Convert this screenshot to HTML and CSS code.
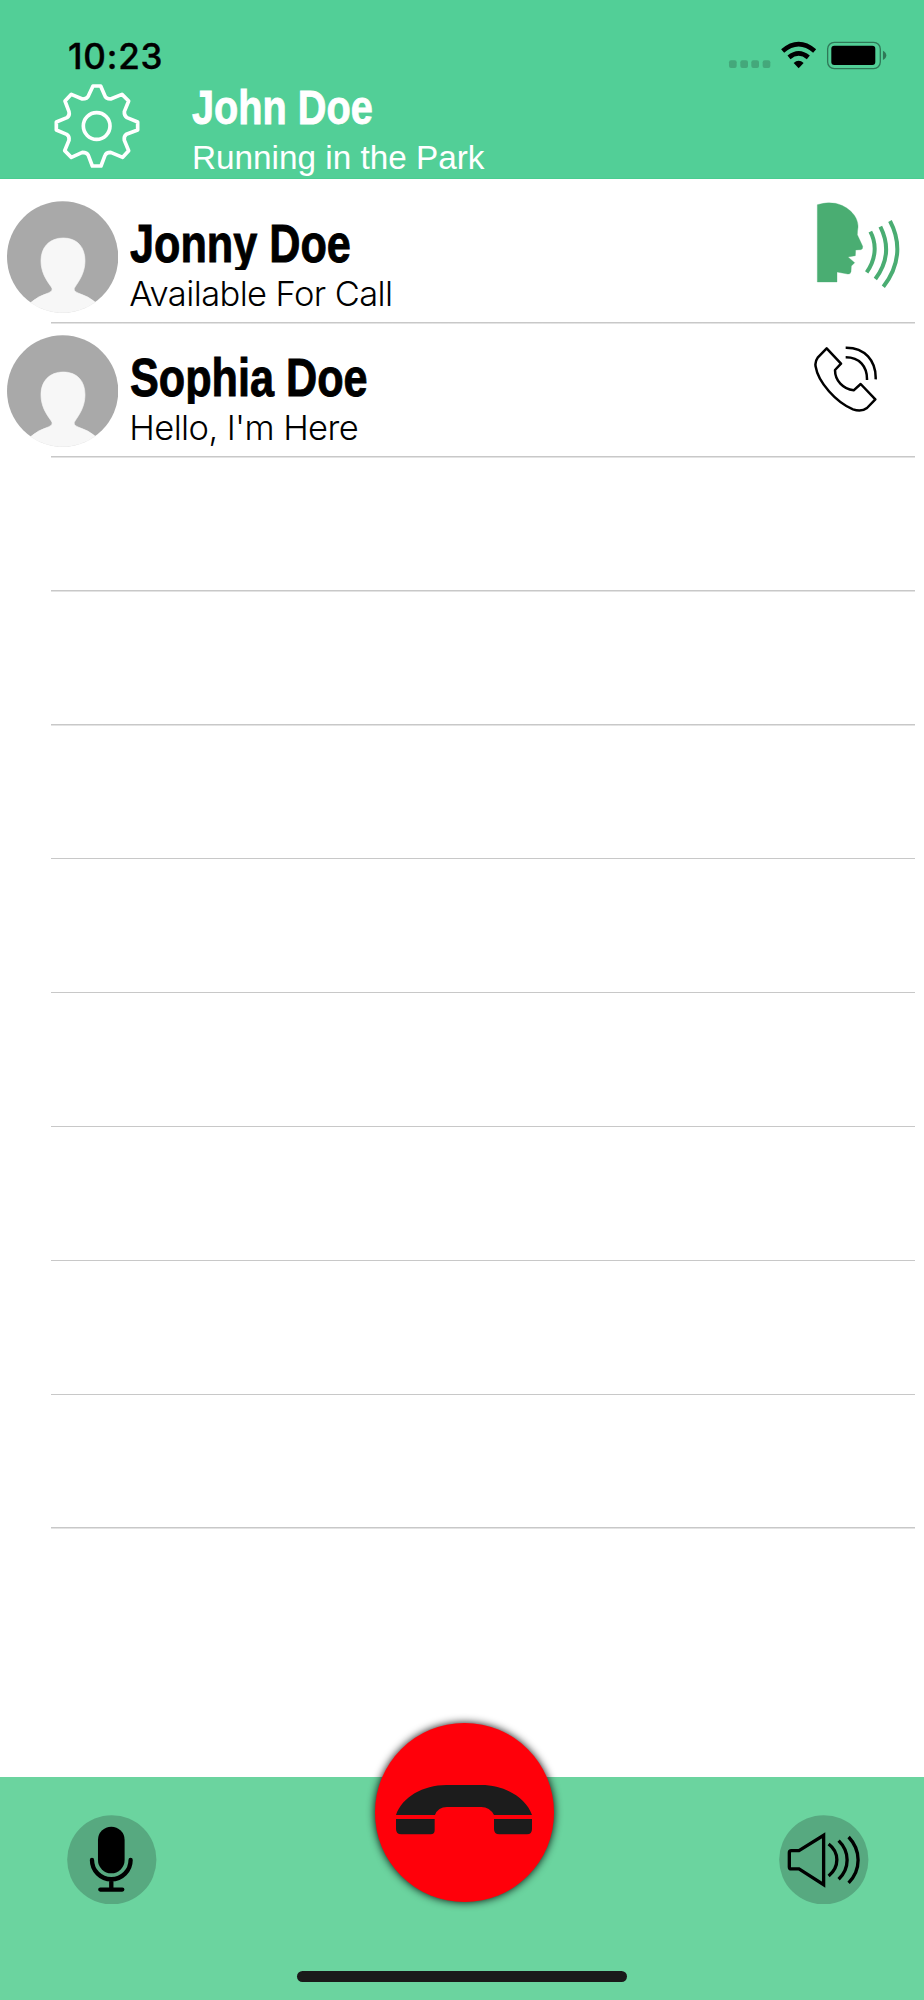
FILE: index.html
```html
<!DOCTYPE html>
<html lang="en">
<head>
<meta charset="UTF-8">
<title>Contacts</title>
<meta content="width=device-width,initial-scale=1.0" name="viewport">
<link rel="stylesheet" href="styles.css">
</head>
<body>
<div id="screen">
    <header id="header">
        <div class="status">
            <div class="clock">10:23</div>
            <svg class="signals" viewBox="80 60 484 92">
                <g fill="#44a87b">
                    <rect x="86" y="121" width="23" height="23" rx="6"/>
                    <rect x="120" y="121" width="23" height="23" rx="6"/>
                    <rect x="153" y="121" width="23" height="23" rx="6"/>
                    <rect x="187" y="121" width="23" height="23" rx="6"/>
                </g>
                <g fill="none" stroke="#000" stroke-width="14">
                    <path d="M247 93Q295 52 343 93"/>
                    <path d="M266 112Q295 88 324 112"/>
                </g>
                <path d="M280 129Q295 115 310 129L295 145Z"/>
                <rect x="382" y="67" width="158" height="79" rx="20" fill="none" stroke="#2f7857" stroke-width="4"/>
                <rect x="393" y="77" width="132" height="58" rx="9"/>
                <path d="M548 92Q558 97 558 106T548 120Z" fill="#2f7857"/>
            </svg>
        </div>
        <div class="me">
            <svg class="gear" viewBox="40 40 264 258">
                <path d="M160 49H183L195 77Q198 88 213 88L247 74L267 94L254 126Q253 138 262 144L294 157V181L260 194Q252 200 254 212L267 243L249 263L213 248Q199 248 196 257L184 289H158L146 257Q142 248 128 248L95 263L75 243L88 212Q90 200 81 194L50 181V157L82 144Q91 138 88 126L76 94L95 74L128 88Q143 88 147 77Z"/>
                <circle cx="171" cy="169" r="40"/>
            </svg>
            <div class="about">
                <h1><span>John Doe</span></h1>
                <p>Running in the Park</p>
            </div>
        </div>
    </header>
    <ul id="contacts">
        <li>
            <svg class="avatar" viewBox="0 0 334 336">
                <circle cx="167" cy="168" r="167" fill="#a9a9a9"/>
                <path d="M71 305Q92 286 124 276Q141 269 133 258C117 236 102 213 102 179C102 138 128 111 169 111S234 138 234 179C234 213 219 236 204 258Q196 269 213 276Q247 287 265 304A168 168 0 0 1 71 305Z" fill="#f7f7f7" stroke="#f7f7f7" stroke-width="2"/>
            </svg>
            <div class="info">
                <h2><span>Jonny Doe</span></h2>
                <p>Available For Call</p>
            </div>
            <svg class="talking" viewBox="108 64 252 264">
                <path d="M112 75Q140 66 166 71C207 80 236 112 234 143Q232 156 232 165L248 200Q249 210 242 210L227 211L226 228L204 232L224 249L214 259L213 276Q211 285 203 283L171 277V307H112Z"/>
                <g fill="none">
                    <path d="M271 156C292 195 287 240 260 278"/>
                    <path d="M301 141C328 195 322 250 286 298"/>
                    <path d="M330 124C365 190 358 260 310 321"/>
                </g>
            </svg>
        </li>
        <li>
            <svg class="avatar" viewBox="0 0 334 336">
                <circle cx="167" cy="168" r="167" fill="#a9a9a9"/>
                <path d="M71 305Q92 286 124 276Q141 269 133 258C117 236 102 213 102 179C102 138 128 111 169 111S234 138 234 179C234 213 219 236 204 258Q196 269 213 276Q247 287 265 304A168 168 0 0 1 71 305Z" fill="#f7f7f7" stroke="#f7f7f7" stroke-width="2"/>
            </svg>
            <div class="info">
                <h2><span>Sophia Doe</span></h2>
                <p>Hello, I'm Here</p>
            </div>
            <svg class="phone" viewBox="100 498 192 201">
                <path d="M141 505L184 551L166 570C166 602 190 627 222 631L243 612L287 658L262 684Q245 697 220 688C170 668 115 606 108 560Q105 545 114 533Z"/>
                <path d="M198 503C255 502 290 542 288 598M198 532C240 532 263 560 262 600"/>
            </svg>
        </li>
        <li></li>
        <li></li>
        <li></li>
        <li></li>
        <li></li>
        <li></li>
        <li></li>
        <li></li>
    </ul>
    <footer id="footer">
        <div class="controls">
            <svg class="round" viewBox="80 133 269 269">
                <circle cx="214.500" cy="267.500" r="134"/>
                <rect x="173" y="168" width="80" height="140" rx="40" fill="#000" stroke="none"/>
                <path d="M155 268A58 58 0 0 0 271 268M213 326V357M180 357H246" stroke-width="13"/>
            </svg>
            <svg class="round" viewBox="86 133 269 269">
                <circle cx="220.500" cy="267.500" r="134"/>
                <path d="M220 194V342L146 295H123Q117 295 117 289V246Q117 240 123 240H146Z" stroke-width="10" stroke-linejoin="miter"/>
                <path d="M235 220C268 245 268 290 235 316M265 210C299 243 299 293 265 326M295 199C333 239 333 297 295 337" stroke-width="10" stroke-linecap="butt"/>
            </svg>
        </div>
        <div class="hangup">
            <svg viewBox="136 250 414 156">
                <path d="M139 343C157 290 220 253 290 253H395C465 253 529 290 547 343H433Q420 319 395 319H292Q265 319 256 343Z"/>
                <path d="M139 355H255V388Q255 401 243 401H155Q139 401 139 385ZM433 355H547V385Q547 401 532 401H449Q433 401 433 385Z"/>
            </svg>
        </div>
        <div class="home"></div>
    </footer>
</div>
</body>
</html>
```

FILE: styles.css
```css
*{
    margin: 0;
    padding: 0;
    box-sizing: border-box;
}
body{
    background: #fff;
    color: #000;
    font-family: Inter, "Liberation Sans", sans-serif;
}
svg{
    display: block;
    flex: none;
}
#screen{
    width: 924px;
    height: 2000px;
    display: flex;
    flex-direction: column;
    overflow: hidden;
}

/* header */
#header{
    height: 179px;
    flex: none;
    background: #52cf97;
    border-bottom: 1px solid #49cc90;
}
.status{
    height: 84px;
    padding: 35px 36px 0 68px;
    display: flex;
    justify-content: space-between;
}
.clock{
    font-size: 35px;
    line-height: 42px;
    font-weight: 500;
    letter-spacing: .800px;
    -webkit-text-stroke: .400px;
}
.signals{
    width: 161.300px;
    height: 30.700px;
    margin-top: 5px;
}
.me{
    display: flex;
    padding-left: 53px;
    color: #fff;
}
.gear{
    width: 88px;
    height: 86px;
    margin-top: -1px;
    fill: none;
    stroke: #fff;
    stroke-width: 11;
    stroke-linejoin: round;
}
.about{
    margin-left: 51px;
    white-space: nowrap;
}
h1, h2{
    font-family: "Liberation Sans", sans-serif;
    font-weight: 700;
    white-space: nowrap;
}
/* condensed bold */
h1 span, h2 span{
    display: inline-block;
    transform: scaleX(.815);
    transform-origin: 0 50%;
    -webkit-text-stroke: .900px;
}
h1{
    font-size: 49px;
    line-height: 46px;
    height: 46px;
}
h1 span{
    transform: scaleX(.810);
}
.about p{
    font-family: "Liberation Sans", sans-serif;
    font-size: 33.300px;
    line-height: 40px;
    margin-top: 8px;
}

/* contact list */
#contacts{
    list-style: none;
    padding-top: 11px;
    flex: 1;
}
#contacts li{
    height: 133.900px;
    display: flex;
    align-items: flex-start;
    padding-left: 7px;
    background: linear-gradient(#c8c8c8, #c8c8c8) 51px 100% / 864px 1.500px no-repeat;
}
.avatar{
    width: 111.300px;
    height: 112px;
    margin-top: 11px;
}
.info{
    margin: 26px auto 0 12px;
    white-space: nowrap;
}
h2{
    width: 260px;
    font-size: 53px;
    line-height: 56px;
    height: 54px;
    overflow: hidden;
}
.info p{
    font-size: 34.500px;
    line-height: 40px;
    margin-top: 4px;
    margin-left: -1px;
    font-weight: 300;
    letter-spacing: -.600px;
}
.talking{
    width: 84px;
    height: 88px;
    margin: 11px 24px 0 0;
    fill: #4aad72;
    stroke: #4aad72;
}
.talking path{
    stroke-width: 1;
}
.talking g path{
    stroke-width: 12;
}
.phone{
    width: 64px;
    height: 67px;
    margin: 22px 46.700px 0 0;
    fill: none;
    stroke: #000;
    stroke-width: 7.500;
    stroke-linejoin: round;
}

/* call bar */
#footer{
    height: 223px;
    flex: none;
    position: relative;
    background: #6bd49f;
}
.controls{
    display: flex;
    justify-content: space-between;
    padding: 37.500px 55.500px 0 67px;
}
.round{
    width: 89.600px;
    height: 89.600px;
    fill: none;
    stroke: #000;
    stroke-linecap: round;
}
.round circle{
    fill: #57a980;
    stroke: none;
}
.hangup{
    position: absolute;
    left: 375px;
    top: -54px;
    width: 178.500px;
    height: 178.500px;
    border-radius: 50%;
    background: #ff000a;
    box-shadow: 0 0 8px rgba(0,0,0,.95);
    display: flex;
    justify-content: center;
    padding-top: 60.500px;
}
.hangup svg{
    width: 138px;
    height: 52px;
    fill: #1c1c1c;
}
.home{
    width: 330px;
    height: 11px;
    border-radius: 6px;
    background: #1a1a1a;
    margin: 67px auto 0;
}
```
